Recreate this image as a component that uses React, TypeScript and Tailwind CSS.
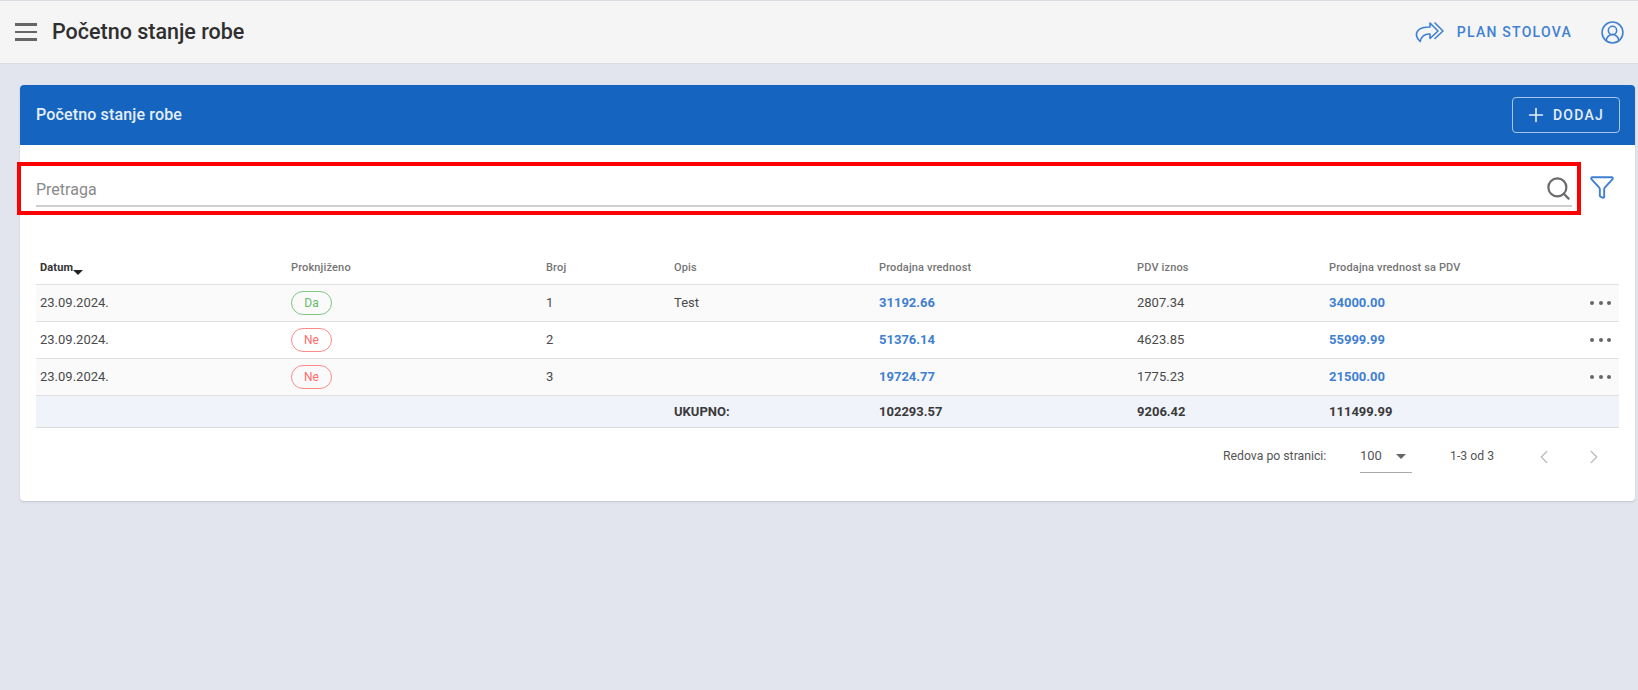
import { ChevronLeft, ChevronRight, CircleUserRound, Filter, Plus, Search } from 'lucide-react';

const rows = [
  { datum: '23.09.2024.', status: 'Da', broj: '1', opis: 'Test', prodajna: '31192.66', pdv: '2807.34', ukupno: '34000.00' },
  { datum: '23.09.2024.', status: 'Ne', broj: '2', opis: '', prodajna: '51376.14', pdv: '4623.85', ukupno: '55999.99' },
  { datum: '23.09.2024.', status: 'Ne', broj: '3', opis: '', prodajna: '19724.77', pdv: '1775.23', ukupno: '21500.00' },
];

function ForwardIcon() {
  return (
    <svg width="29" height="22" viewBox="0 0 29 22" fill="none" stroke="currentColor" strokeWidth="1.6" strokeLinejoin="round" strokeLinecap="round">
      <path d="M15 2l8 8-8 7.500v-4.500c-5-.3-8.500 1.500-9.800 7.500C1.500 17.500 0 12.500 3.200 9.200 6 6.300 10.500 6 15 6z" />
      <path d="M20 2l8 8-8 7.500" />
    </svg>
  );
}

function StatusBadge({ value }: { value: string }) {
  const isYes = value === 'Da';
  return (
    <span
      className={`flex h-6 w-[41px] items-center justify-center rounded-full border text-xs ${
        isYes ? 'border-[#81c784] text-[#66bb6a]' : 'border-[#ff8a8a] text-[#ff6b6b]'
      }`}
    >
      {value}
    </span>
  );
}

export default function App() {
  return (
    <div className="flex h-[690px] flex-col overflow-hidden bg-[#e2e5ee] font-['Roboto',sans-serif]">
      {/* header */}
      <header className="flex h-[64px] shrink-0 items-center justify-between border-y border-[#dcdde3] bg-[#f5f5f5] pr-[13px] pl-[15px]">
        <div className="flex items-center gap-[15px]">
          <div className="flex w-[22px] flex-col gap-[5px]">
            <span className="h-[2.500px] bg-[#666]" />
            <span className="h-[2.500px] bg-[#666]" />
            <span className="h-[2.500px] bg-[#666]" />
          </div>
          <h1 className="text-[21.500px] font-medium text-[#2f2f2f]">Početno stanje robe</h1>
        </div>
        <div className="flex items-center text-[#3f80d2]">
          <ForwardIcon />
          <span className="mr-[28px] ml-[13px] text-sm font-medium tracking-[1.25px]">PLAN STOLOVA</span>
          <CircleUserRound size={25} strokeWidth={1.500} />
        </div>
      </header>

      {/* card */}
      <main className="mt-[21px] mr-[3px] ml-[20px] h-[416px] rounded-[4px] bg-white shadow-[0_1px_2px_rgba(0,0,0,0.15)]">
        <div className="flex h-[60px] items-center justify-between rounded-t-[4px] bg-[#1565c0] pr-[15px] pl-4">
          <h2 className="text-base font-medium tracking-[0.15px] text-[#e6eef8]">Početno stanje robe</h2>
          <button className="flex h-9 w-[108px] items-center justify-center gap-[6px] rounded-[4px] border border-[#a9c6e8] pr-[3px] text-sm font-medium tracking-[1.25px] text-[#e6eef8]">
            <Plus size={22} strokeWidth={1.750} />
            DODAJ
          </button>
        </div>

        <div className="mt-[17px] -ml-[3px] flex items-center">
          <div className="h-[53px] w-[1564px] border-[4px] border-[#f00] pt-[2px] pr-[5px] pl-[15px]">
            <div className="flex h-[39px] items-end justify-between border-b-2 border-[#cfcfcf]">
              <span className="pb-[3px] text-base text-[#8a8a8a]">Pretraga</span>
              <Search size={27} strokeWidth={2} className="mb-[3px] text-[#6b6b6b]" />
            </div>
          </div>
          <Filter size={26} strokeWidth={1.750} className="mb-[4px] ml-[8px] text-[#3f80d2]" />
        </div>

        {/* table */}
        <table className="mt-[32px] ml-4 w-[1583px] table-fixed border-collapse text-[13px] text-[#4a4a4a]">
          <colgroup>
            <col className="w-[251px]" />
            <col className="w-[255px]" />
            <col className="w-[128px]" />
            <col className="w-[205px]" />
            <col className="w-[258px]" />
            <col className="w-[192px]" />
            <col />
            <col className="w-[40px]" />
          </colgroup>
          <thead>
            <tr className="h-[37px] border-b border-[#e0e0e0] text-left text-[11px] font-medium tracking-[0.15px] text-[#757575]">
              <th className="pt-[5px] pl-1 font-bold text-[#333]">
                <span className="flex items-center">
                  Datum
                  <span className="mt-[9px] border-x-[5.500px] border-t-[5.500px] border-x-transparent border-t-[#222]" />
                </span>
              </th>
              <th className="pt-[5px] pl-1 font-medium">Proknjiženo</th>
              <th className="pt-[5px] pl-1 font-medium">Broj</th>
              <th className="pt-[5px] pl-1 font-medium">Opis</th>
              <th className="pt-[5px] pl-1 font-medium">Prodajna vrednost</th>
              <th className="pt-[5px] pl-1 font-medium">PDV iznos</th>
              <th className="pt-[5px] pl-1 font-medium">Prodajna vrednost sa PDV</th>
              <th />
            </tr>
          </thead>
          <tbody>
            {rows.map((row, i) => (
              <tr key={row.broj} className={`h-[37px] border-b border-[#e0e0e0] ${i % 2 === 0 ? 'bg-[#fafafa]' : 'bg-white'}`}>
                <td className="pl-1">{row.datum}</td>
                <td className="pl-1">
                  <StatusBadge value={row.status} />
                </td>
                <td className="pl-1">{row.broj}</td>
                <td className="pl-1">{row.opis}</td>
                <td className="pl-1 font-bold text-[#3f80d2]">{row.prodajna}</td>
                <td className="pl-1">{row.pdv}</td>
                <td className="pl-1 font-bold text-[#3f80d2]">{row.ukupno}</td>
                <td>
                  <div className="flex justify-end gap-[4.500px] pr-[8px]">
                    <span className="h-1 w-1 rounded-full bg-[#666]" />
                    <span className="h-1 w-1 rounded-full bg-[#666]" />
                    <span className="h-1 w-1 rounded-full bg-[#666]" />
                  </div>
                </td>
              </tr>
            ))}
            <tr className="h-[32px] border-y border-[#dcdcdc] bg-[#f1f3fb] font-bold text-[#3a3a3a]">
              <td />
              <td />
              <td />
              <td className="pt-[1px] pl-1">UKUPNO:</td>
              <td className="pt-[1px] pl-1">102293.57</td>
              <td className="pt-[1px] pl-1">9206.42</td>
              <td className="pt-[1px] pl-1">111499.99</td>
              <td />
            </tr>
          </tbody>
        </table>

        {/* pagination */}
        <div className="mt-[11px] ml-[1203px] flex h-[36px] items-center text-[12.250px] text-[#555]">
          <span className="w-[137px]">Redova po stranici:</span>
          <div className="flex h-[34px] w-[52px] items-center justify-between self-start border-b border-[#aaa] pt-[2px] pr-[6px]">
            <span className="text-[13px]">100</span>
            <span className="border-x-[5px] border-t-[5px] border-x-transparent border-t-[#666]" />
          </div>
          <span className="ml-[38px] w-[83px]">1-3 od 3</span>
          <ChevronLeft size={22} strokeWidth={1.500} className="text-[#bdbdbd]" />
          <ChevronRight size={22} strokeWidth={1.500} className="ml-[28px] text-[#bdbdbd]" />
        </div>
      </main>
    </div>
  );
}
